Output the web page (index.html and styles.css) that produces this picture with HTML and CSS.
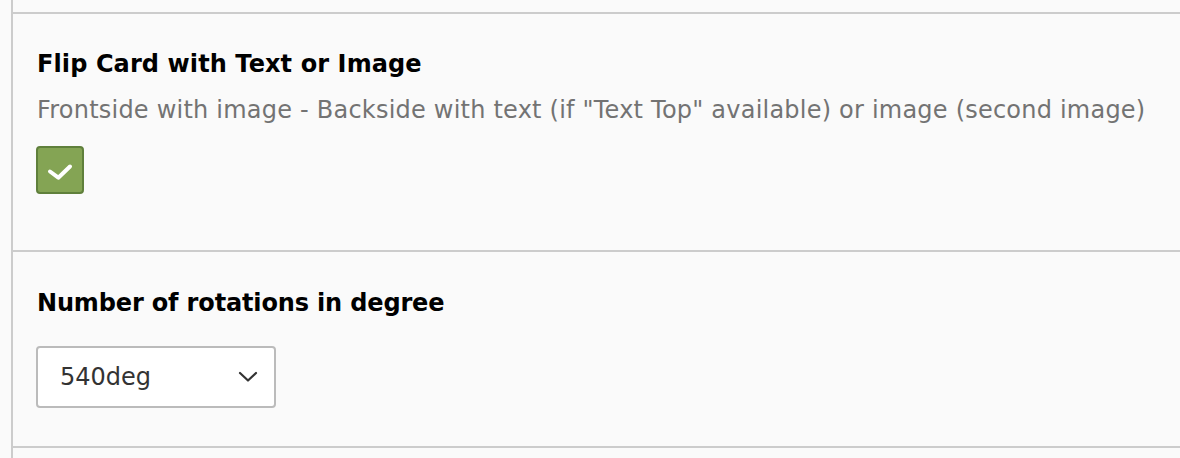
FILE: index.html
```html
<!DOCTYPE html>
<html>
<head>
<meta charset="utf-8">
<link rel="stylesheet" href="styles.css">
</head>
<body>
<div class="top-gap"></div>
<div class="panel">
  <div class="section sec-flip">
    <div class="label">Flip Card with Text or Image</div>
    <div class="desc">Frontside with image - Backside with text (if "Text Top" available) or image (second image)</div>
    <div class="checkbox">
      <svg width="48" height="48" viewBox="0 0 48 48"><path d="M14 25.5 L22.3 31.7 L34 20.5" fill="none" stroke="#fff" stroke-width="4" stroke-linecap="round" stroke-linejoin="round"/></svg>
    </div>
  </div>
  <div class="section sec-rot">
    <div class="label label-rot">Number of rotations in degree</div>
    <div class="select">
      <span class="select-value">540deg</span>
      <svg class="chevron" width="20" height="12" viewBox="0 0 20 12"><path d="M2 2 L10 9.5 L18 2" fill="none" stroke="#333" stroke-width="2.2" stroke-linecap="round" stroke-linejoin="round"/></svg>
    </div>
  </div>
  <div class="section sec-next"></div>
</div>
</body>
</html>
```
FILE: styles.css
```css
html, body {
  margin: 0;
  padding: 0;
  background: #fafafa;
  font-family: "DejaVu Sans", Verdana, sans-serif;
  color: #000;
}
.top-gap {
  height: 12px;
  margin-left: 11px;
  border-left: 2px solid #cccccc;
}
.panel {
  margin-left: 11px;
  border-left: 2px solid #cccccc;
}
.section {
  border-top: 2px solid #cccccc;
  padding-left: 24px;
}
.sec-flip {
  height: 236px;
}
.label {
  font-size: 24px;
  font-weight: bold;
  line-height: 36px;
  letter-spacing: 0.1px;
}
.label-rot {
  letter-spacing: -0.15px;
}
.sec-flip .label {
  padding-top: 32px;
}
.desc {
  font-size: 24px;
  line-height: 36px;
  color: #737373;
  margin-top: 10px;
  letter-spacing: 0.22px;
  white-space: nowrap;
}
.checkbox {
  margin-top: 18px;
  margin-left: -1px;
  width: 44px;
  height: 44px;
  border: 2px solid #5f7f3b;
  border-radius: 4px;
  background: #84a454;
  position: relative;
}
.checkbox svg {
  position: absolute;
  left: -2px;
  top: -2px;
}
.sec-rot {
  height: 194px;
}
.sec-rot .label {
  padding-top: 33px;
}
.select {
  margin-top: 25px;
  margin-left: -1px;
  border: 2px solid #bbbbbb;
  border-radius: 4px;
  background: #fff;
  display: flex;
  align-items: center;
  justify-content: space-between;
  padding: 0 16px 0 22px;
  box-sizing: border-box;
  width: 240px;
  height: 62px;
}
.select-value {
  font-size: 24px;
  color: #333;
}
.chevron {
  display: block;
}
.sec-next {
  height: 20px;
}
```
